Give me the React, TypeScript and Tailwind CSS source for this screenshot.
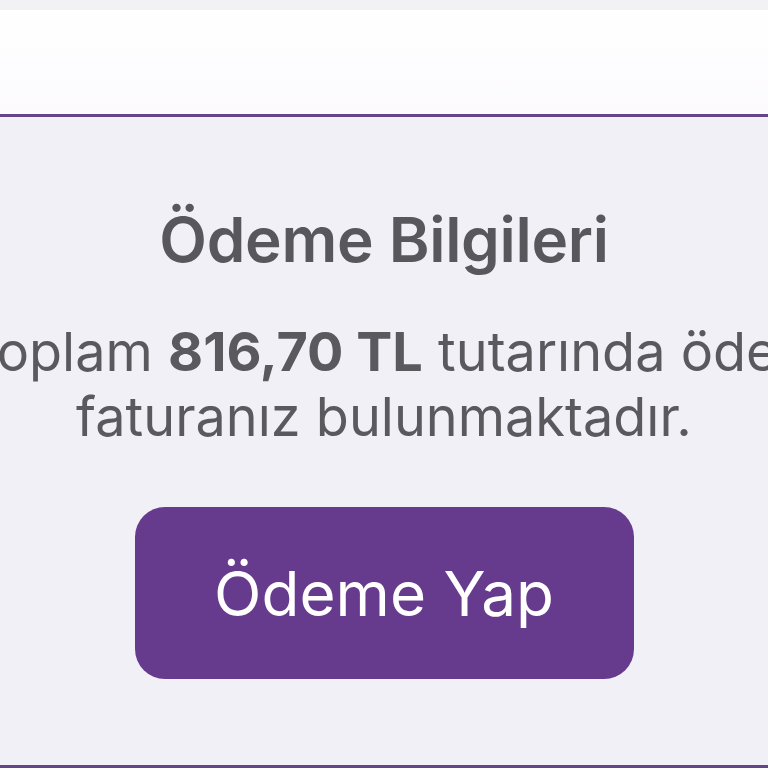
import React from "react";

export default function App() {
  return (
    <div
      className="w-[768px] h-[768px] overflow-hidden bg-[#f2f0f7] flex flex-col"
      style={{ fontFamily: 'Inter, "Noto Sans", "Liberation Sans", sans-serif' }}
    >
      <div className="h-[10px] bg-[#f2f2f4] shrink-0" />
      <div className="h-[104px] bg-gradient-to-b from-white to-[#fcfafd] shrink-0" />
      <div className="h-[3px] bg-[#65458a] shrink-0" />
      <div className="flex-1 flex flex-col items-center overflow-hidden">
        <h1 className="mt-[92px] text-[62px] leading-[62px] font-semibold text-[#58585c] tracking-[-0.3px] whitespace-nowrap">
          Ödeme Bilgileri
        </h1>
        <div className="mt-[48px] w-full text-[54px] leading-[65px] text-[#5a5a5e]">
          <div className="whitespace-nowrap -indent-[34px]">
            Toplam <span className="font-bold">816,70 TL</span> tutarında ödenmemiş
          </div>
          <div className="text-center whitespace-nowrap">faturanız bulunmaktadır.</div>
        </div>
        <button className="mt-[58px] w-[499px] h-[172px] shrink-0 rounded-[30px] bg-[#663a8d] text-white text-[62px] font-normal flex items-center justify-center whitespace-nowrap">
          Ödeme Yap
        </button>
      </div>
      <div className="h-[3px] bg-[#65458a] shrink-0" />
    </div>
  );
}
